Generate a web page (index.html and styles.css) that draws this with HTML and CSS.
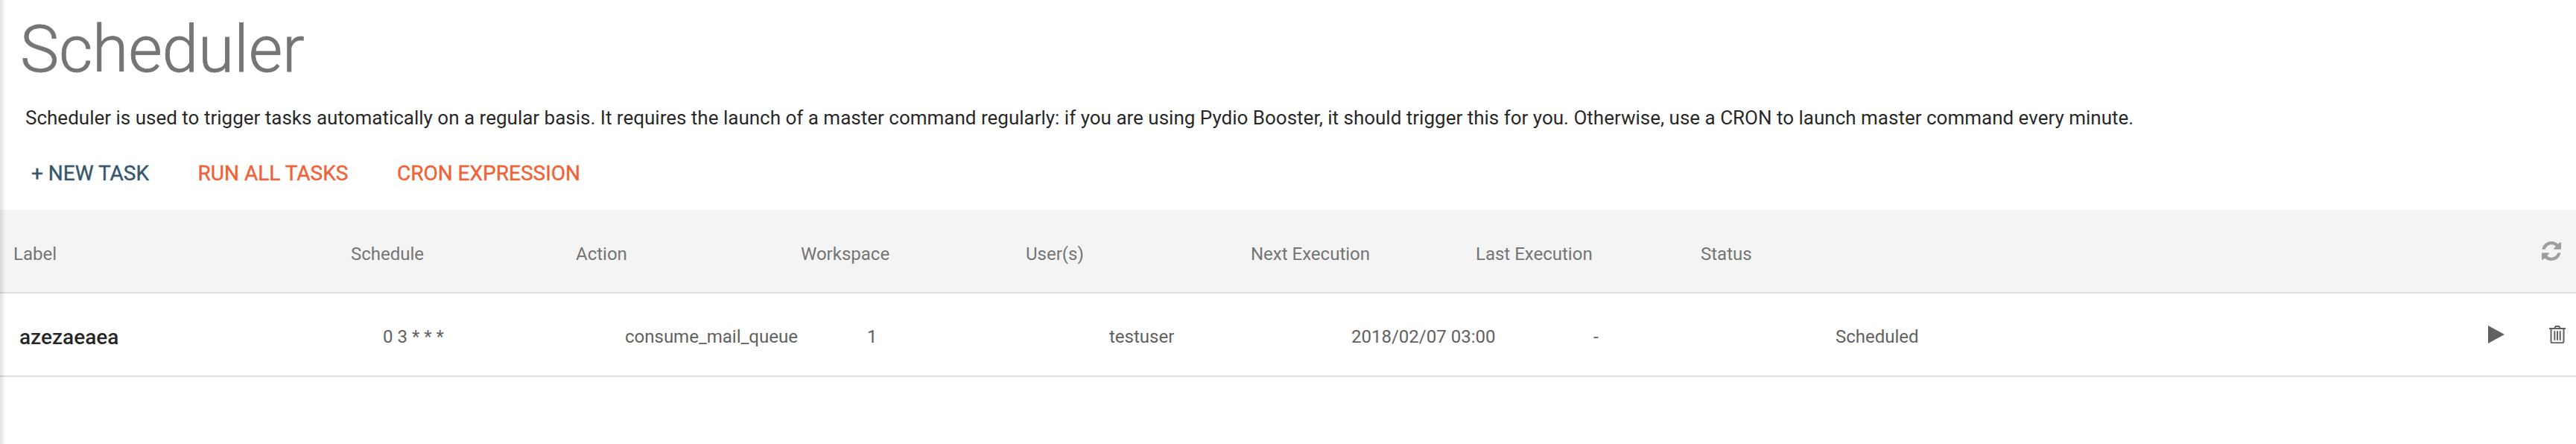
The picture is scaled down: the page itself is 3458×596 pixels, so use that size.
FILE: index.html
```html
<!DOCTYPE html>
<html lang="en">
<head>
<meta charset="utf-8">
<title>Scheduler</title>
<link rel="stylesheet" href="styles.css">
</head>
<body>
<main class="page">
  <h1 class="title">Scheduler</h1>
  <p class="intro">Scheduler is used to trigger tasks automatically on a regular basis. It requires the launch of a master command regularly: if you are using Pydio Booster, it should trigger this for you. Otherwise, use a CRON to launch master command every minute.</p>
  <div class="actions">
    <button class="btn btn-primary">+ New task</button>
    <button class="btn btn-accent">Run all tasks</button>
    <button class="btn btn-accent">Cron expression</button>
  </div>
  <div class="table">
    <div class="head">
      <span>Label</span><span>Schedule</span><span>Action</span><span>Workspace</span><span>User(s)</span><span>Next Execution</span><span>Last Execution</span><span>Status</span>
      <svg class="icon-refresh" viewBox="0 0 1536 1536" aria-hidden="true"><path d="M1511 928q0 5-1 7-64 268-268 434.500T764 1536q-146 0-282.500-55T238 1324l-129 129q-19 19-45 19t-45-19-19-45V960q0-26 19-45t45-19h448q26 0 45 19t19 45-19 45l-137 137q71 66 161 102t187 36q134 0 250-65t186-179q11-17 53-117 8-23 30-23h192q13 0 22.500 9.500t9.500 22.500zm25-800v448q0 26-19 45t-45 19h-448q-26 0-45-19t-19-45 19-45l138-138Q969 256 768 256q-134 0-250 65T332 500q-11 17-53 117-8 23-30 23H50q-13 0-22.500-9.500T18 608v-7q65-268 270-434.500T768 0q146 0 284 55.500T1297 212l130-129q19-19 45-19t45 19 19 45z"/></svg>
    </div>
    <div class="row">
      <span class="label">azezaeaea</span><span>0 3 * * *</span><span>consume_mail_queue</span><span>1</span><span>testuser</span><span>2018/02/07 03:00</span><span>-</span><span>Scheduled</span>
      <div class="row-icons">
        <svg class="icon-play" viewBox="0 0 22 24" aria-hidden="true"><path d="M0 0l22 12L0 24z"/></svg>
        <svg class="icon-trash" viewBox="0 0 22 24" aria-hidden="true"><path d="M7.500 3.500l.8-2c.2-.4.500-.6.900-.6h3.600c.4 0 .7.200.9.600l.8 2M.5 4h21M2.500 4v17.500c0 1 .7 1.700 1.700 1.700h13.600c1 0 1.700-.7 1.700-1.700V4M7.300 8v11M11 8v11M14.700 8v11"/></svg>
      </div>
    </div>
  </div>
</main>
</body>
</html>
```
FILE: styles.css
```css
* { box-sizing: border-box; }
html, body { margin: 0; background: #fff; }
body { font-family: Roboto, "Liberation Sans", sans-serif; color: #000; }
.page { position: relative; height: 596px; overflow: hidden; padding-top: 12px; }
.page::before { content: ""; position: absolute; left: 0; top: 0; bottom: 0; width: 8px; background: linear-gradient(to right, rgba(0,0,0,.12), rgba(0,0,0,0)); z-index: 1; }
.title { margin: 0; padding-left: 27px; font-size: 88px; line-height: 108px; font-weight: 300; letter-spacing: -.25px; color: #757575; -webkit-text-stroke: .8px #757575; }
.intro { margin: 20px 0 0; padding-left: 34px; font-size: 26px; line-height: 36px; color: rgba(0,0,0,.87); }
.actions { display: flex; gap: 1.5px; margin-top: 29px; padding-left: 10px; }
.btn { border: 0; background: none; padding: 0 32px; height: 56px; font: 400 28px/56px Roboto, sans-serif; text-transform: uppercase; -webkit-text-stroke: .4px; }
.btn-primary { color: #37566e; }
.btn-accent { color: #ef6236; }
.head, .row { display: grid; align-items: center; position: relative; }
.head span { padding-top: 8px; }
.row span { padding-top: 6px; }
.table { margin-top: 21px; }
.head { height: 112px; padding-left: 18px; grid-template-columns: 453px repeat(7, 302px) 1fr; background: #f4f4f4; border-bottom: 2px solid #e0e0e0; font-size: 24px; color: #757575; }
.row { height: 112px; padding-left: 26px; grid-template-columns: 488px repeat(7, 325px) 1fr; border-bottom: 2px solid #e0e0e0; font-size: 24px; color: #616161; }
.label { font-size: 28px; font-weight: 500; color: rgba(0,0,0,.87); }
.icon-refresh { justify-self: end; width: 26px; height: 26px; margin-right: 20px; fill: #9e9e9e; }
.row-icons { display: flex; justify-content: flex-end; align-items: center; gap: 60px; padding-right: 14px; }
.icon-play { width: 22px; height: 24px; fill: #616161; }
.icon-trash { width: 22px; height: 24px; fill: none; stroke: #616161; stroke-width: 2; stroke-linecap: round; stroke-linejoin: round; }
```
